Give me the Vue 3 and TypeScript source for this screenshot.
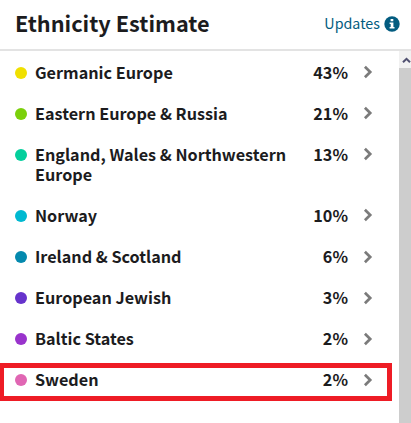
<script setup lang="ts">
interface Region {
  name: string
  percent: number
  color: string
  highlighted?: boolean
}

const regions: Region[] = [
  { name: 'Germanic Europe', percent: 43, color: '#f0e000' },
  { name: 'Eastern Europe & Russia', percent: 21, color: '#7bd00b' },
  { name: 'England, Wales & Northwestern Europe', percent: 13, color: '#04cf9c' },
  { name: 'Norway', percent: 10, color: '#00b9d1' },
  { name: 'Ireland & Scotland', percent: 6, color: '#0489ae' },
  { name: 'European Jewish', percent: 3, color: '#6633cc' },
  { name: 'Baltic States', percent: 2, color: '#9933cc' },
  { name: 'Sweden', percent: 2, color: '#e066b3', highlighted: true },
]
</script>

<template>
  <section class="panel">
    <header class="header">
      <h1 class="title">Ethnicity Estimate</h1>
      <a class="updates">
        <span class="updates-label">Updates</span>
        <svg class="info" viewBox="0 0 16 16" aria-hidden="true">
          <circle cx="8" cy="8" r="7.7" fill="#035c80" />
          <path d="M6.6 3h2.7v2.2H6.6zM5.6 6.5h3.8v4.4h1.1v1.6H5.6v-1.6h1.1V8.1H5.6z" fill="#fff" />
        </svg>
      </a>
    </header>
    <div class="body">
      <ul class="list">
        <li
          v-for="region in regions"
          :key="region.name"
          class="row"
          :class="{ highlighted: region.highlighted }"
        >
          <span class="dot" :style="{ backgroundColor: region.color }"></span>
          <span class="name">{{ region.name }}</span>
          <span class="percent">{{ region.percent }}%</span>
          <svg class="chevron" viewBox="0 0 10 14" aria-hidden="true">
            <path d="M1.9 1.8 7.2 7l-5.3 5.2" fill="none" stroke="#7b7b7b" stroke-width="2.7" />
          </svg>
        </li>
      </ul>
      <div class="scrollbar">
        <div class="scroll-up">
          <svg viewBox="0 0 12 17" aria-hidden="true">
            <path d="M4 11.3 7.5 7.8l3.5 3.5" fill="none" stroke="#505070" stroke-width="2" />
          </svg>
        </div>
        <div class="thumb"></div>
      </div>
    </div>
  </section>
</template>

<style>
body {
  margin: 0;
  background: #fff;
}
</style>

<style scoped>
.panel {
  display: flex;
  flex-direction: column;
  width: 411px;
  height: 423px;
  overflow: hidden;
  background: #fff;
  color: #1c1c1e;
  font-family: "Noto Sans CJK SC", "Noto Sans", sans-serif;
}

.header {
  box-sizing: border-box;
  display: flex;
  flex: none;
  align-items: center;
  justify-content: space-between;
  height: 51px;
  padding: 0 11px 1px 15px;
  border-bottom: 2px solid #e3e3e3;
}

.title {
  margin: 0 0 2px;
  font-size: 21.7px;
  font-weight: 700;
  line-height: 30px;
  white-space: nowrap;
}

.updates {
  display: flex;
  align-items: center;
  gap: 4px;
  color: #035c80;
  font-size: 14.3px;
  line-height: 20px;
}

.updates-label {
  margin-bottom: 2px;
}

.info {
  width: 16px;
  height: 16px;
}

.body {
  display: flex;
  flex: 1;
  min-height: 0;
}

.list {
  flex: 1;
  margin: 0;
  padding: 1px 7px 0 0;
  list-style: none;
}

.row {
  display: flex;
  align-items: flex-start;
  padding: 10px 19px 11px 15px;
  font-size: 16.2px;
  font-weight: 700;
  line-height: 20px;
}

.row.highlighted {
  margin-top: 4px;
  padding: 1px 14px 7px 11px;
  border: 5px solid #ee1c25;
  border-left-width: 4px;
}

.dot {
  flex: none;
  width: 12px;
  height: 12px;
  margin: 5px 8px 0 0;
  border-radius: 50%;
}

.name {
  width: 256px;
}

.percent {
  flex: 1;
  text-align: right;
}

.chevron {
  flex: none;
  width: 10px;
  height: 14px;
  margin: 3px 0 0 15px;
}

.row:nth-child(n + 5) .chevron {
  margin-top: 4px;
}

.scrollbar {
  display: flex;
  flex-direction: column;
  width: 12px;
}

.scroll-up {
  height: 17px;
  background: #f1f1f1;
}

.scroll-up svg {
  display: block;
  width: 12px;
  height: 17px;
}

.thumb {
  flex: 1;
  background: #cdcdcd;
}
</style>
